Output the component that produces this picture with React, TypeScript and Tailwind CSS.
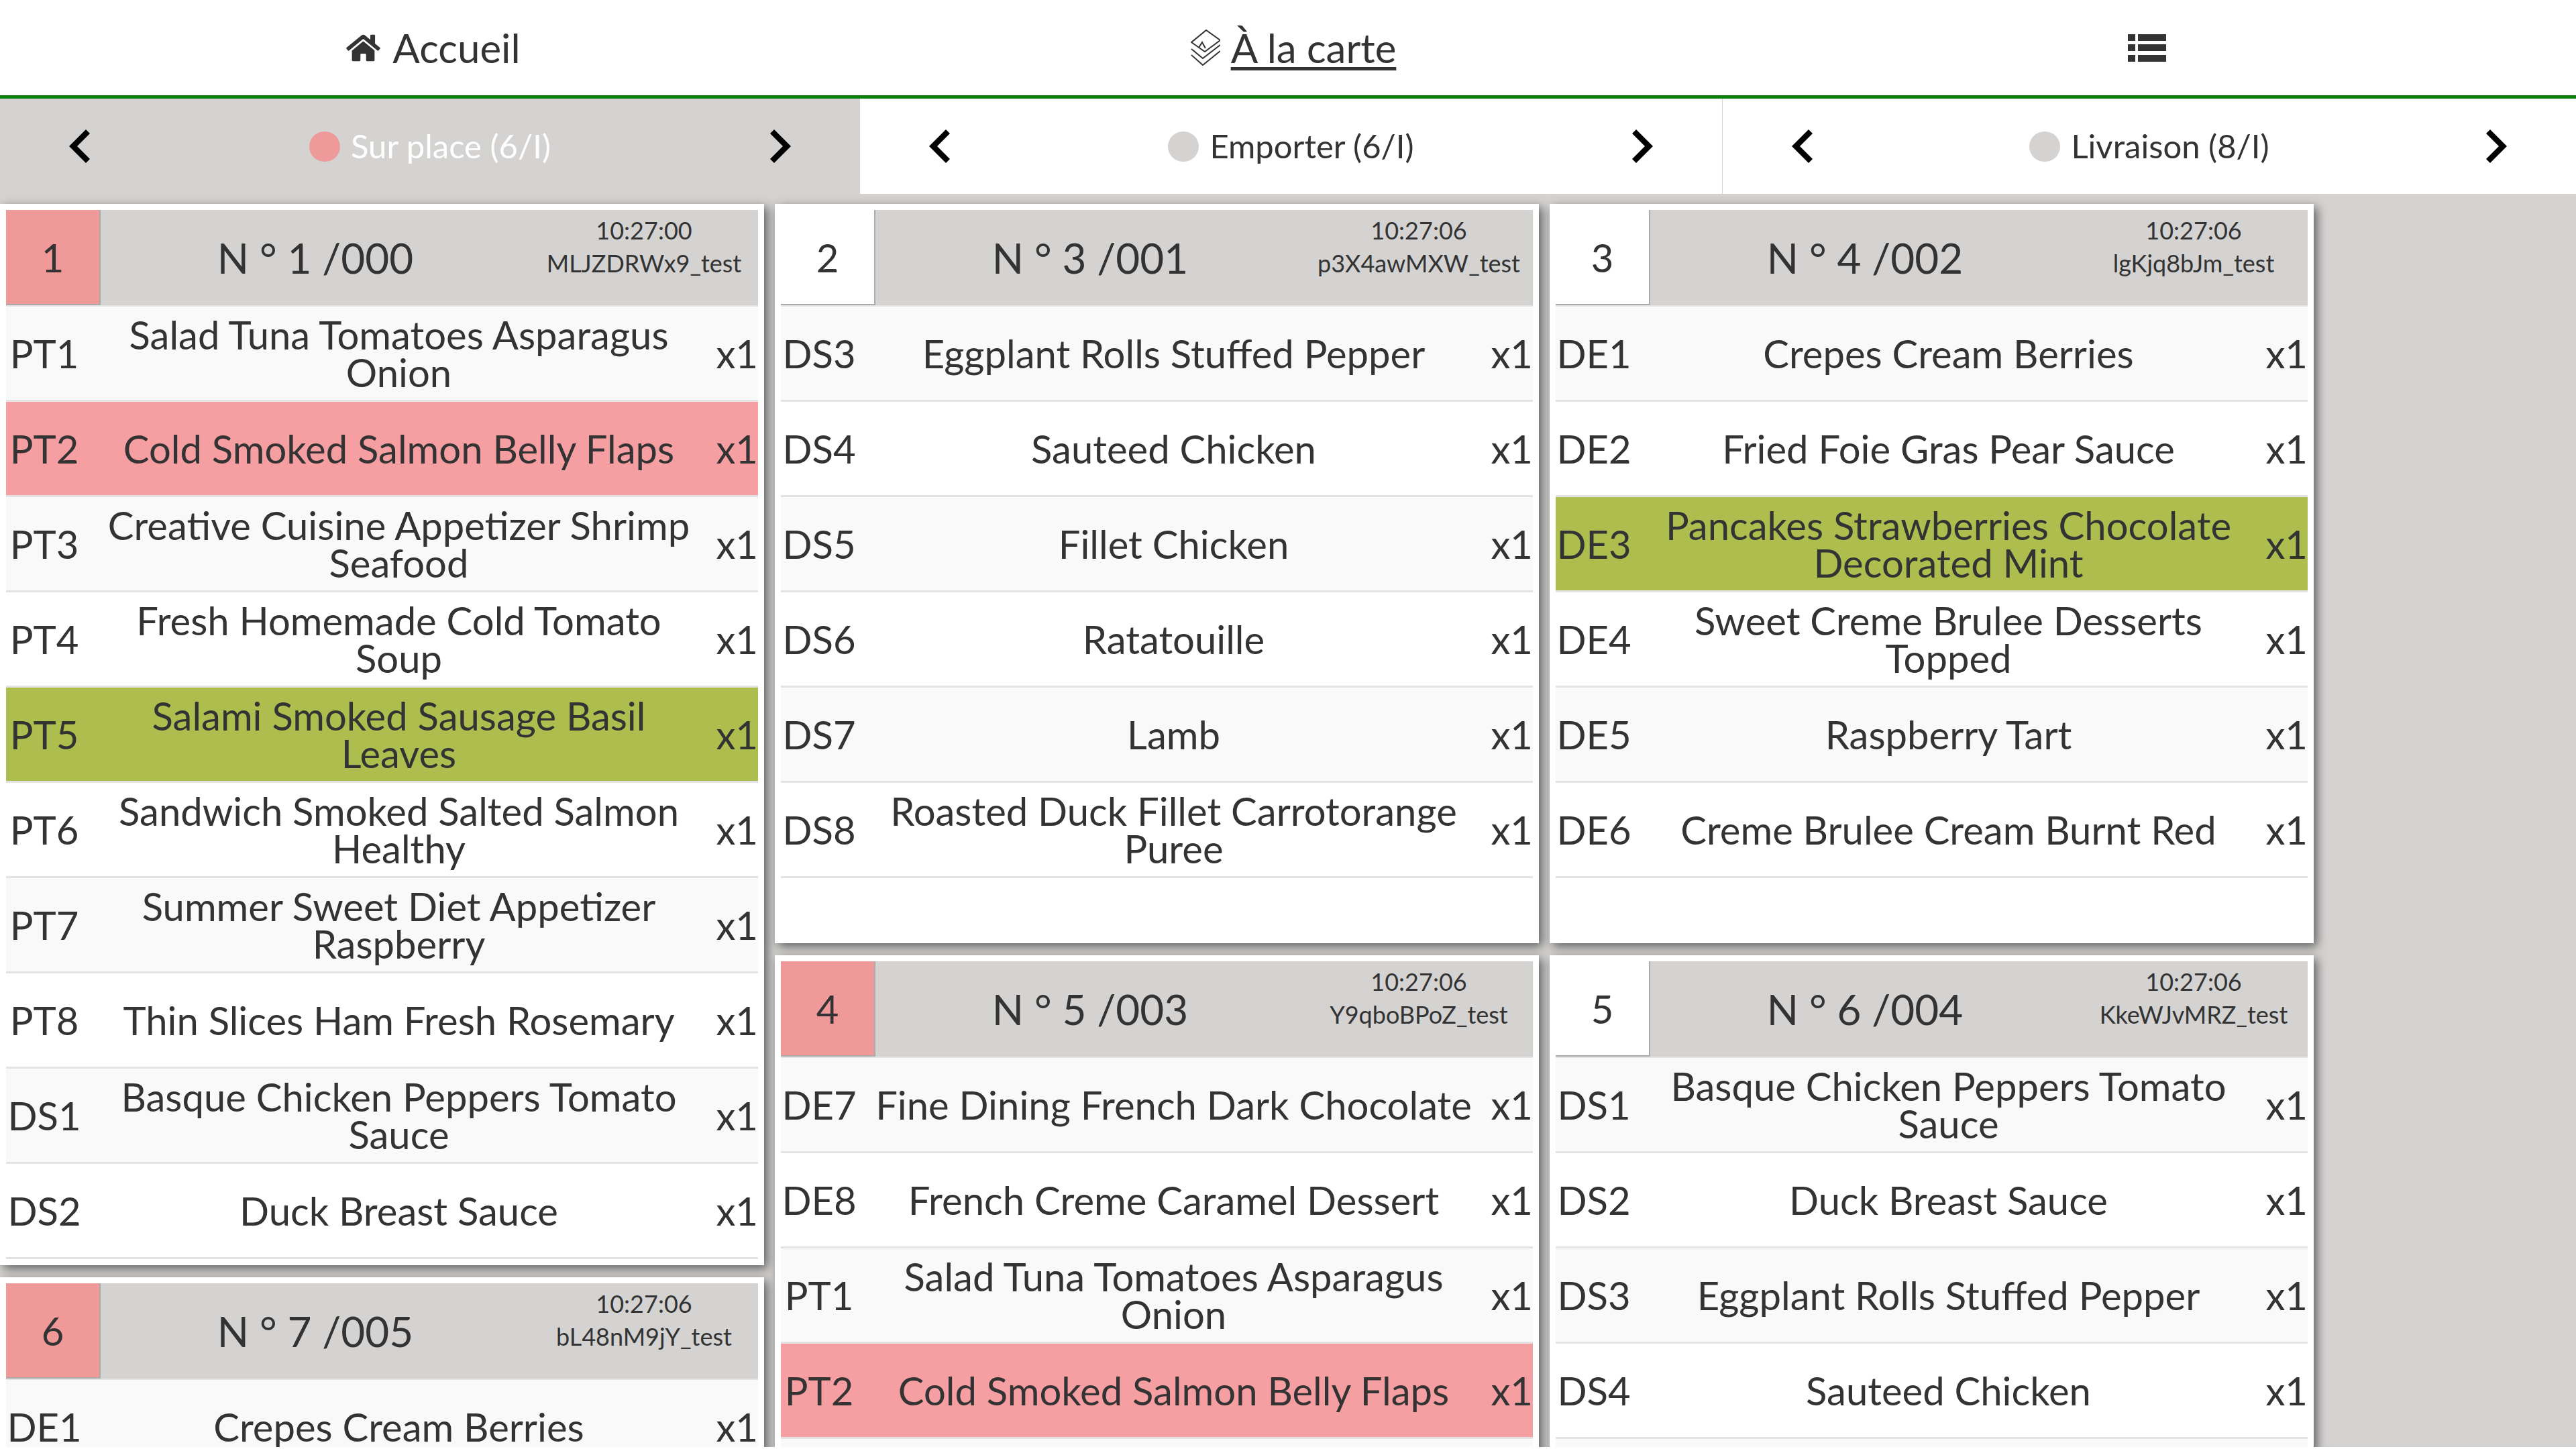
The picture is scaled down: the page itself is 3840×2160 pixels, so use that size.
import { FaHome } from "react-icons/fa";

type Item = {
  code: string;
  lines: string[];
  tone?: "pink" | "green";
};

type Order = {
  rank: number;
  label: string;
  time: string;
  ref: string;
  hot?: boolean;
  tall?: boolean;
  items: Item[];
};

const columns: Order[][] = [
  [
    {
      rank: 1,
      label: "N ° 1 /000",
      time: "10:27:00",
      ref: "MLJZDRWx9_test",
      hot: true,
      items: [
        { code: "PT1", lines: ["Salad Tuna Tomatoes Asparagus", "Onion"] },
        { code: "PT2", lines: ["Cold Smoked Salmon Belly Flaps"], tone: "pink" },
        { code: "PT3", lines: ["Creative Cuisine Appetizer Shrimp", "Seafood"] },
        { code: "PT4", lines: ["Fresh Homemade Cold Tomato", "Soup"] },
        { code: "PT5", lines: ["Salami Smoked Sausage Basil", "Leaves"], tone: "green" },
        { code: "PT6", lines: ["Sandwich Smoked Salted Salmon", "Healthy"] },
        { code: "PT7", lines: ["Summer Sweet Diet Appetizer", "Raspberry"] },
        { code: "PT8", lines: ["Thin Slices Ham Fresh Rosemary"] },
        { code: "DS1", lines: ["Basque Chicken Peppers Tomato", "Sauce"] },
        { code: "DS2", lines: ["Duck Breast Sauce"] },
      ],
    },
    {
      rank: 6,
      label: "N ° 7 /005",
      time: "10:27:06",
      ref: "bL48nM9jY_test",
      hot: true,
      items: [{ code: "DE1", lines: ["Crepes Cream Berries"] }],
    },
  ],
  [
    {
      rank: 2,
      label: "N ° 3 /001",
      time: "10:27:06",
      ref: "p3X4awMXW_test",
      tall: true,
      items: [
        { code: "DS3", lines: ["Eggplant Rolls Stuffed Pepper"] },
        { code: "DS4", lines: ["Sauteed Chicken"] },
        { code: "DS5", lines: ["Fillet Chicken"] },
        { code: "DS6", lines: ["Ratatouille"] },
        { code: "DS7", lines: ["Lamb"] },
        { code: "DS8", lines: ["Roasted Duck Fillet Carrotorange", "Puree"] },
      ],
    },
    {
      rank: 4,
      label: "N ° 5 /003",
      time: "10:27:06",
      ref: "Y9qboBPoZ_test",
      hot: true,
      items: [
        { code: "DE7", lines: ["Fine Dining French Dark Chocolate"] },
        { code: "DE8", lines: ["French Creme Caramel Dessert"] },
        { code: "PT1", lines: ["Salad Tuna Tomatoes Asparagus", "Onion"] },
        { code: "PT2", lines: ["Cold Smoked Salmon Belly Flaps"], tone: "pink" },
        { code: "PT3", lines: ["Creative Cuisine Appetizer Shrimp", "Seafood"] },
      ],
    },
  ],
  [
    {
      rank: 3,
      label: "N ° 4 /002",
      time: "10:27:06",
      ref: "lgKjq8bJm_test",
      tall: true,
      items: [
        { code: "DE1", lines: ["Crepes Cream Berries"] },
        { code: "DE2", lines: ["Fried Foie Gras Pear Sauce"] },
        { code: "DE3", lines: ["Pancakes Strawberries Chocolate", "Decorated Mint"], tone: "green" },
        { code: "DE4", lines: ["Sweet Creme Brulee Desserts", "Topped"] },
        { code: "DE5", lines: ["Raspberry Tart"] },
        { code: "DE6", lines: ["Creme Brulee Cream Burnt Red"] },
      ],
    },
    {
      rank: 5,
      label: "N ° 6 /004",
      time: "10:27:06",
      ref: "KkeWJvMRZ_test",
      items: [
        { code: "DS1", lines: ["Basque Chicken Peppers Tomato", "Sauce"] },
        { code: "DS2", lines: ["Duck Breast Sauce"] },
        { code: "DS3", lines: ["Eggplant Rolls Stuffed Pepper"] },
        { code: "DS4", lines: ["Sauteed Chicken"] },
        { code: "DS5", lines: ["Fillet Chicken"] },
      ],
    },
  ],
];

function Chevron({ flip }: { flip?: boolean }) {
  return (
    <svg viewBox="0 0 31 50" className={flip ? "h-[50px] w-[31px] rotate-180" : "h-[50px] w-[31px]"}>
      <path d="M25 0 L31 6 L12 25 L31 44 L25 50 L0 25 Z" fill="#000" />
    </svg>
  );
}

function MenuIcon() {
  return (
    <svg viewBox="0 0 44 54" className="h-[54px] w-[44px]" fill="none" stroke="#333" strokeWidth="2">
      <path d="M1 19 L23 1 L44 16 L21 33 Z" />
      <path d="M12 27 L17 19 L22 28" />
      <path d="M1 29 L18 43 L44 23" />
      <path d="M1 38 L18 53 L44 32" />
    </svg>
  );
}

function ListIcon() {
  return (
    <svg viewBox="0 0 57 41" className="h-[41px] w-[57px]" fill="#333">
      <rect x="0" y="0" width="11" height="10" />
      <rect x="15" y="0" width="42" height="10" />
      <rect x="0" y="15" width="11" height="10" />
      <rect x="15" y="15" width="42" height="10" />
      <rect x="0" y="31" width="11" height="10" />
      <rect x="15" y="31" width="42" height="10" />
    </svg>
  );
}

function Tab({ label, active, width, divider }: { label: string; active?: boolean; width: string; divider?: boolean }) {
  return (
    <div
      className={`flex h-[142px] items-center justify-between px-[103px] ${width} ${active ? "bg-[#d4d3d2] text-white" : "bg-white text-[#333]"} ${divider ? "border-r border-[#d4d3d2]" : ""}`}
    >
      <Chevron />
      <div className="flex items-center gap-4 text-[49px]">
        <span className={`h-[45px] w-[46px] rounded-full ${active ? "bg-[#ef9a9a]" : "bg-[#d4d3d2]"}`} />
        <span>{label}</span>
      </div>
      <Chevron flip />
    </div>
  );
}

function Row({ item, index }: { item: Item; index: number }) {
  const bg =
    item.tone === "pink"
      ? "bg-[#f69fa2]"
      : item.tone === "green"
        ? "bg-[#adbd4e]"
        : index % 2 === 0
          ? "bg-[#f9f9f9]"
          : "bg-white";
  return (
    <div className={`flex h-[142px] items-center border-b-[3px] border-[#e3e3e3] text-[58px] leading-[56px] ${bg}`}>
      <div className="w-[114px] shrink-0 text-center">{item.code}</div>
      <div className="flex-1 text-center">
        {item.lines.map((line) => (
          <div key={line} className="whitespace-nowrap">
            {line}
          </div>
        ))}
      </div>
      <div className="w-[64px] shrink-0 text-right">x1</div>
    </div>
  );
}

function Card({ order }: { order: Order }) {
  return (
    <div
      className={`bg-white p-[9px] shadow-[5px_5px_14px_rgba(0,0,0,0.55)] ${order.tall ? "min-h-[1102px]" : ""}`}
    >
      <div className="flex h-[144px] border-b-2 border-[#e3e3e3] bg-[#d4d3d2]">
        <div
          className={`flex w-[141px] shrink-0 items-center justify-center border-r-2 border-b-2 border-[#aaa] text-[58px] ${order.hot ? "bg-[#ef9999]" : "bg-white"}`}
        >
          {order.rank}
        </div>
        <div className="flex flex-1 items-center justify-center text-[62px]">{order.label}</div>
        <div className="flex w-[340px] shrink-0 flex-col items-center pt-[6px] text-[36px] leading-[49px]">
          <span>{order.time}</span>
          <span>{order.ref}</span>
        </div>
      </div>
      {order.items.map((item, i) => (
        <Row key={item.code} item={item} index={i} />
      ))}
    </div>
  );
}

export default function App() {
  return (
    <div className="h-[2160px] w-[3840px] overflow-hidden bg-white font-['Lato',sans-serif] text-[#333]">
      {/* Top nav */}
      <nav className="grid h-[147px] grid-cols-3 border-b-[5px] border-[#0a7d0a] text-[60px]">
        <div className="flex items-center justify-center gap-[18px] pl-[12px]">
          <FaHome className="h-[45px] w-[51px]" />
          <span>Accueil</span>
        </div>
        <div className="flex items-center justify-center gap-4 pl-[16px]">
          <MenuIcon />
          <span className="underline decoration-[5px] underline-offset-[6px]">À la carte</span>
        </div>
        <div className="flex items-center justify-center">
          <ListIcon />
        </div>
      </nav>

      {/* Service tabs */}
      <div className="flex">
        <Tab label="Sur place (6/I)" active width="w-[1282px]" />
        <Tab label="Emporter (6/I)" width="w-[1286px]" divider />
        <Tab label="Livraison (8/I)" width="w-[1272px]" />
      </div>

      {/* Order cards */}
      <main className="flex h-[1868px] gap-4 overflow-hidden bg-[#d4d3d2] pt-[15px]">
        {columns.map((cards) => (
          <div key={cards[0].rank} className="flex w-[1139px] shrink-0 flex-col gap-[18px]">
            {cards.map((order) => (
              <Card key={order.rank} order={order} />
            ))}
          </div>
        ))}
      </main>
    </div>
  );
}
